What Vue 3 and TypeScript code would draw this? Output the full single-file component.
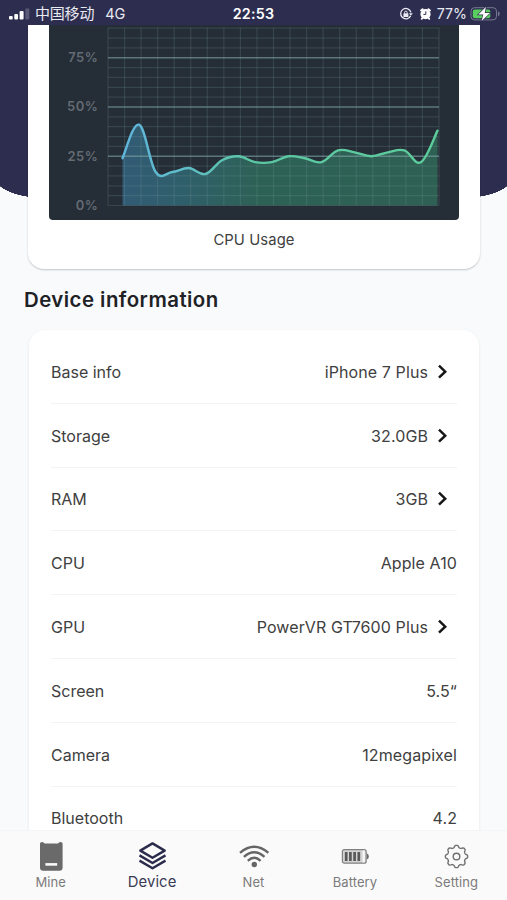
<script setup lang="ts">
interface InfoRow {
  label: string
  value: string
  link?: boolean
}

const rows: InfoRow[] = [
  { label: 'Base info', value: 'iPhone 7 Plus', link: true },
  { label: 'Storage', value: '32.0GB', link: true },
  { label: 'RAM', value: '3GB', link: true },
  { label: 'CPU', value: 'Apple A10' },
  { label: 'GPU', value: 'PowerVR GT7600 Plus', link: true },
  { label: 'Screen', value: '5.5“' },
  { label: 'Camera', value: '12megapixel' },
  { label: 'Bluetooth', value: '4.2' },
]

// Chart geometry, in the units of the chart's viewBox
const left = 59
const right = 390
const base = 180.5
const perPercent = 1.97

const usage: number[] = [24, 41, 17, 17, 19, 16, 23, 25, 22, 22, 25, 24, 22, 28, 27, 25, 27, 28, 22, 38]
const startX = 73.5
const stepX = 16.58

const columns: number[] = Array.from({ length: 21 }, (_, i) => left + (i * (right - left)) / 20)
const lines = Array.from({ length: 19 }, (_, i) => ({ y: base - i * 5 * perPercent, major: i > 0 && i % 5 === 0 }))
const ticks: number[] = [75, 50, 25, 0]

function smooth(values: number[]): string {
  const pts = values.map((v, i) => [startX + i * stepX, base - v * perPercent])
  let d = `M${pts[0][0]} ${pts[0][1]}`
  for (let i = 0; i < pts.length - 1; i++) {
    const a = pts[Math.max(i - 1, 0)]
    const b = pts[i]
    const c = pts[i + 1]
    const e = pts[Math.min(i + 2, pts.length - 1)]
    const k = 5.4
    d += `C${b[0] + (c[0] - a[0]) / k} ${b[1] + (c[1] - a[1]) / k} ${c[0] - (e[0] - b[0]) / k} ${c[1] - (e[1] - b[1]) / k} ${c[0]} ${c[1]}`
  }
  return d
}

const curve = smooth(usage)
const area = `${curve}V${base}H${startX}Z`

// Outline of the eight-toothed settings gear
const gear = (() => {
  const pts: string[] = []
  const n = 96
  for (let i = 0; i < n; i++) {
    const t = (i / n) * Math.PI * 2
    const r = 10.1 + 1.1 * Math.tanh(1.8 * Math.cos(8 * t))
    pts.push(`${(12.5 + r * Math.sin(t)).toFixed(2)} ${(12.5 - r * Math.cos(t)).toFixed(2)}`)
  }
  return `M${pts.join('L')}Z`
})()
</script>

<template>
  <div class="screen">
    <header class="status">
      <div class="side">
        <svg class="signal" width="22" height="12" viewBox="0 0 22 12">
          <rect x="0" y="8" width="3.7" height="3.5" rx="1" fill="#fff" />
          <rect x="5.3" y="6" width="3.7" height="5.5" rx="1" fill="#fff" />
          <rect x="10.6" y="3" width="4" height="8.5" rx="1" fill="#fff" />
          <rect x="16.3" y="0.5" width="4" height="11" rx="1" fill="#5a5b79" />
        </svg>
        <span class="carrier">中国移动</span>
        <span class="network">4G</span>
      </div>
      <span class="clock">22:53</span>
      <div class="side end">
        <svg width="14" height="14" viewBox="0 0 14 14" fill="none" stroke="#e9e9f2">
          <path d="M11.6 8.9A5.2 5.2 0 1 1 11.9 5.3" stroke-width="1.3" />
          <path d="M10 6.2h3.8l-1.9 2.6z" fill="#e9e9f2" stroke="none" />
          <rect x="4.4" y="6.3" width="5" height="3.6" rx=".5" fill="#e9e9f2" stroke="none" />
          <path d="M5.6 6.5V5.4a1.3 1.3 0 0 1 2.6 0v1.1" />
        </svg>
        <svg class="alarm" width="13" height="14" viewBox="0 0 13 14">
          <circle cx="6.5" cy="7.1" r="5.1" fill="#fff" />
          <path d="M2 3.5l1.6-1.3M11 3.5L9.4 2.2M2.7 11.8l1-1M10.3 11.8l-1-1" stroke="#fff" stroke-width="1.9" stroke-linecap="round" />
          <path d="M6.8 4.3v3.1H4.4" fill="none" stroke="#2d2e4f" stroke-width="1" />
        </svg>
        <span class="percent">77%</span>
        <svg class="charge" width="31" height="16" viewBox="0 0 31 16">
          <rect x="1" y="1.7" width="25.5" height="12.2" rx="3.5" fill="none" stroke="#777891" />
          <rect x="2.8" y="3.4" width="17.5" height="8.8" rx="2" fill="#59cf60" />
          <path d="M28 5.5c2.2.5 2.2 4.2 0 4.7z" fill="#777891" />
          <path d="M15.9 1L8.3 8.6h5L11.6 15 20 6.9h-5.3z" fill="#fff" stroke="#2d2e4f" stroke-width="1.3" paint-order="stroke" />
        </svg>
      </div>
    </header>

    <main class="content">
      <section class="hero">
        <div class="card usage">
          <svg class="chart" width="410" height="195" viewBox="0 0 410 195">
            <defs>
              <linearGradient id="stroke" x1="73" x2="390" y1="0" y2="0" gradientUnits="userSpaceOnUse">
                <stop offset="0" stop-color="#5fb5dc" />
                <stop offset=".2" stop-color="#5fbdc8" />
                <stop offset=".4" stop-color="#5cc7a4" />
                <stop offset="1" stop-color="#5dcd9c" />
              </linearGradient>
              <linearGradient id="fill" x1="73" x2="390" y1="0" y2="0" gradientUnits="userSpaceOnUse">
                <stop offset="0" stop-color="#315b75" />
                <stop offset=".2" stop-color="#2f5f6a" />
                <stop offset=".42" stop-color="#2e6156" />
                <stop offset="1" stop-color="#2e6153" />
              </linearGradient>
            </defs>
            <path :d="area" fill="url(#fill)" />
            <g stroke="#78969a" stroke-opacity=".22" stroke-width="1.2">
              <line v-for="x in columns" :key="x" :x1="x" :x2="x" y1="2.5" :y2="base" />
              <line
                v-for="l in lines"
                :key="l.y"
                :class="{ major: l.major }"
                :x1="left"
                :x2="right"
                :y1="l.y"
                :y2="l.y"
              />
            </g>
            <path :d="curve" fill="none" stroke="url(#stroke)" stroke-width="2.4" stroke-linecap="round" />
            <text v-for="t in ticks" :key="t" class="tick" x="49.3" :y="base - t * perPercent + 4.3">{{ t }}%</text>
          </svg>
          <p class="caption">CPU Usage</p>
        </div>
      </section>

      <h2 class="title">Device information</h2>

      <section class="card info">
        <div v-for="row in rows" :key="row.label" class="row">
          <span>{{ row.label }}</span>
          <span class="value">
            {{ row.value }}
            <svg v-if="row.link" class="chevron" width="12" height="16" viewBox="0 0 12 16">
              <path d="M2 1.7L8.2 7.7l-6.2 6" fill="none" stroke="#161616" stroke-width="2.5" />
            </svg>
          </span>
        </div>
      </section>
    </main>

    <nav class="tabs">
      <a class="tab">
        <svg width="30" height="30" viewBox="0 0 30 30">
          <path d="M6 1Q8 1 8.6 2.6H22Q22.6 1 24.6 1Q26.9 1.2 26.6 4V26.6Q26.6 29.8 23.4 29.8H7.2Q4 29.8 4 26.6V4Q3.7 1.2 6 1Z" fill="#6a6a6a" />
          <path d="M9.4 23.4h11.8" stroke="#fafafa" stroke-width="2.6" />
        </svg>
        <span>Mine</span>
      </a>
      <a class="tab active">
        <svg width="30" height="30" viewBox="0 0 30 30" fill="none" stroke="#2b2b4c" stroke-width="2.4" stroke-linejoin="round">
          <path d="M15.5 2.4l12.2 7.2-12.2 7.2L3.3 9.6z" />
          <path d="M2.5 14.4l13 7.6 13-7.6M2.5 19.6l13 7.6 13-7.6" />
        </svg>
        <span>Device</span>
      </a>
      <a class="tab">
        <svg width="30" height="30" viewBox="0 0 30 30" fill="none" stroke="#666" stroke-width="2.3">
          <path d="M1 11.8q14.2-12 28.4 0M4.9 15.9q10.3-9.4 20.6 0M8.8 19.8q6.4-6 12.8 0" />
          <circle cx="15.3" cy="23.5" r="2.7" fill="#666" stroke="none" />
        </svg>
        <span>Net</span>
      </a>
      <a class="tab">
        <svg width="30" height="30" viewBox="0 0 30 30">
          <rect x="2.4" y="8.6" width="23.8" height="13.6" rx="2" fill="#d4d4d4" stroke="#818181" stroke-width="1.2" />
          <path d="M22.6 9.4h2.2v12h-2.2z" fill="#f8f8f8" />
          <path d="M6.2 10.9v9M10.4 10.9v9M14.6 10.9v9M18.8 10.9v9" stroke="#595959" stroke-width="2.7" />
          <path d="M27 12.5q1.8.5 1.8 2.9t-1.8 2.9z" fill="#686868" />
        </svg>
        <span>Battery</span>
      </a>
      <a class="tab">
        <svg width="25" height="30" viewBox="0 -3 25 30" fill="none" stroke="#707070" stroke-width="1.4" stroke-linejoin="round">
          <path :d="gear" />
          <circle cx="12.5" cy="12.5" r="3.3" />
        </svg>
        <span>Setting</span>
      </a>
    </nav>
  </div>
</template>

<style>
body {
  margin: 0;
}
</style>

<style scoped>
.screen {
  display: flex;
  flex-direction: column;
  width: 507px;
  height: 900px;
  overflow: hidden;
  background: #f8fafc;
  color: #404040;
  font-family: Inter, "Noto Sans CJK SC", sans-serif;
}

.status {
  display: grid;
  grid-template-columns: 1fr auto 1fr;
  align-items: center;
  flex: none;
  height: 25px;
  padding: 2px 6px 0 9px;
  box-sizing: border-box;
  background: #2d2e4f;
  color: #e9e9f2;
  font-size: 14.5px;
  line-height: 22px;
}

.side {
  display: flex;
  align-items: center;
}

.end {
  justify-content: flex-end;
}

.carrier {
  margin-left: 4px;
  font-size: 15px;
  letter-spacing: -0.2px;
}

.network {
  margin-left: 11px;
}

.clock {
  margin-right: 3px;
  color: #fff;
  font-size: 14.3px;
  font-weight: 600;
  letter-spacing: 0.2px;
}

.alarm {
  margin-left: 6px;
}

.percent {
  margin-left: 5px;
  font-size: 14.2px;
}

.charge {
  margin-left: 3px;
}

.content {
  flex: 1;
  min-height: 0;
  overflow: hidden;
}

.hero {
  height: 245px;
  padding: 0 27px 0 28px;
  background: radial-gradient(ellipse 50px 22px at 44px 151px, #2d2e4f 99%, transparent 100%),
    radial-gradient(ellipse 50px 22px at 463px 151px, #2d2e4f 99%, transparent 100%),
    linear-gradient(#2d2e4f, #2d2e4f) 0 0 / 100% 156px no-repeat;
}

.card {
  background: #fff;
  box-shadow: 0 1px 2px rgb(0 0 0 / 22%);
}

.usage {
  height: 244px;
  border-radius: 0 0 16px 16px;
}

.chart {
  display: block;
  margin-left: 21px;
  border-radius: 0 0 4px 4px;
  background: #252d36;
}

.major {
  stroke: #78a0a3;
  stroke-opacity: 0.65;
  stroke-width: 1.5;
}

.tick {
  fill: #636b74;
  font-size: 13px;
  font-weight: 600;
  letter-spacing: 0.5px;
  text-anchor: end;
}

.caption {
  margin: 10px 0 0;
  font-size: 14.8px;
  line-height: 20px;
  letter-spacing: 0.1px;
  text-align: center;
}

.title {
  margin: 17px 0 0 24px;
  color: #202124;
  font-size: 20.4px;
  font-weight: 600;
  line-height: 25px;
  letter-spacing: 0.47px;
}

.info {
  margin: 18px 28px 0 29px;
  padding: 10px 22px;
  border-radius: 16px;
  box-shadow: 0 1px 3px rgb(0 0 0 / 9%);
}

.row {
  display: flex;
  align-items: center;
  justify-content: space-between;
  box-sizing: border-box;
  height: 63.8px;
  padding-top: 1px;
  border-bottom: 1px solid #f3f3f3;
  font-size: 16px;
}

.value {
  display: flex;
  align-items: center;
  letter-spacing: 0.1px;
}

.chevron {
  margin: 0 8px 0 9px;
}

.tabs {
  display: flex;
  flex: none;
  height: 69px;
  border-top: 1px solid #f5f5f5;
  background: #fafafa;
}

.tab {
  display: flex;
  flex: 1;
  flex-direction: column;
  align-items: center;
  padding-top: 10px;
  color: #7b7b7b;
  font-size: 13px;
  line-height: 20px;
}

.tab span {
  margin-top: 1px;
  letter-spacing: 0.08px;
}

.active {
  color: #3b3b55;
  font-size: 14.8px;
}
</style>
